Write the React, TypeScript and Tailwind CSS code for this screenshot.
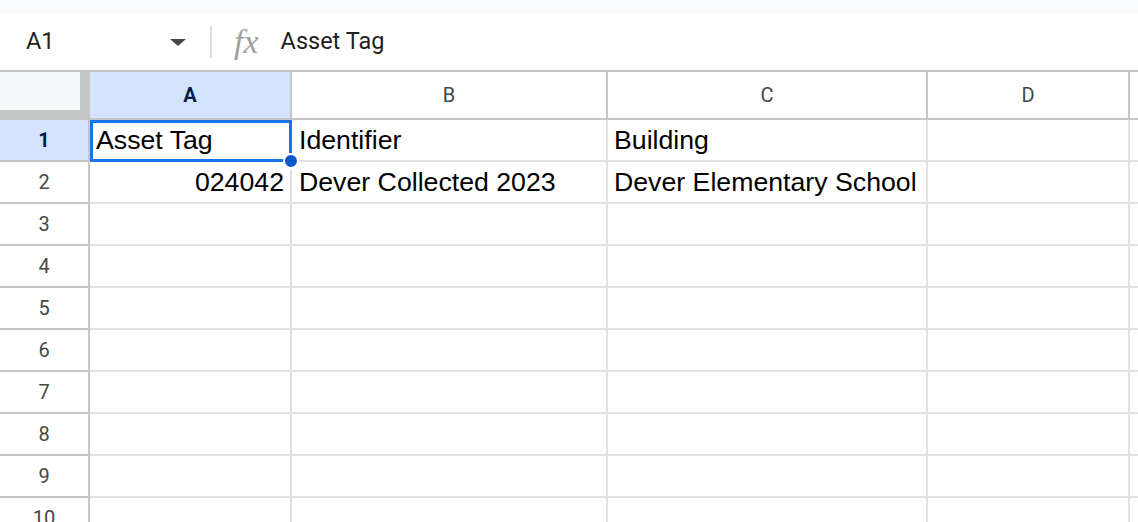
import React from "react";

const columns = [
  { key: "A", width: "w-[202px]", active: true },
  { key: "B", width: "w-[316px]", active: false },
  { key: "C", width: "w-[320px]", active: false },
  { key: "D", width: "w-[202px]", active: false },
];

const rows: { a?: string; b?: string; c?: string }[] = [
  { a: "Asset Tag", b: "Identifier", c: "Building" },
  { a: "024042", b: "Dever Collected 2023", c: "Dever Elementary School" },
  {},
  {},
  {},
  {},
  {},
  {},
  {},
  {},
];

const cellFont = { fontFamily: '"Liberation Sans", Arial, sans-serif' };
const uiFont = { fontFamily: 'Roboto, "Liberation Sans", Arial, sans-serif' };

const FormulaBar = () => (
  <div className="flex h-[56px] items-center bg-white text-[23.5px] text-[#1f1f1f]" style={uiFont}>
    <div className="flex w-[210px] items-center pl-[26px] pr-[24px]">
      <span className="flex-1">A1</span>
      <span className="h-0 w-0 border-x-[8px] border-t-[7px] border-x-transparent border-t-[#444746]" />
    </div>
    <div className="h-[32px] w-[2px] bg-[#dadce0]" />
    <span
      className="ml-[22px] mr-[22px] text-[34px] italic leading-none text-[#a0a0a0]"
      style={{ fontFamily: '"Liberation Serif", "Times New Roman", serif' }}
    >
      fx
    </span>
    <span>Asset Tag</span>
  </div>
);

const HeaderRow = () => (
  <div className="flex h-[50px] border-y-2 border-[#c4c7c5] text-[20px]" style={uiFont}>
    <div className="flex h-full w-[90px] shrink-0 flex-col bg-[#c4c7c5]">
      <div className="h-[38px] w-[80px] bg-[#f8f9fa]" />
    </div>
    {columns.map((col) => (
      <div
        key={col.key}
        className={`${col.width} flex shrink-0 items-center justify-center border-r-2 border-[#c4c7c5] ${
          col.active ? "bg-[#d3e3fd] font-bold text-[#041e49]" : "bg-white text-[#444746]"
        }`}
      >
        {col.key}
      </div>
    ))}
    <div className="flex-1 bg-white" />
  </div>
);

const DataRow = ({ n, row }: { n: number; row: { a?: string; b?: string; c?: string } }) => {
  const active = n === 1;
  return (
    <div className="flex h-[42px]">
      <div
        className={`flex w-[90px] shrink-0 items-center justify-center border-b-2 border-r-2 border-[#c4c7c5] text-[20px] ${
          active ? "bg-[#d3e3fd] font-bold text-[#041e49]" : "bg-white text-[#444746]"
        }`}
        style={uiFont}
      >
        {n}
      </div>
      <div className="flex flex-1 text-[26.7px] text-black" style={cellFont}>
        <div className="flex w-[202px] shrink-0 items-center justify-end border-b-2 border-r-2 border-[#e1e1e1] px-[6px]">
          {row.a && (
            <span className={row.a === "024042" ? "" : "mr-auto"}>{row.a}</span>
          )}
        </div>
        <div className="flex w-[316px] shrink-0 items-center border-b-2 border-r-2 border-[#e1e1e1] px-[7px]">
          {row.b}
        </div>
        <div className="flex w-[320px] shrink-0 items-center border-b-2 border-r-2 border-[#e1e1e1] px-[6px] whitespace-nowrap">
          {row.c}
        </div>
        <div className="w-[202px] shrink-0 border-b-2 border-r-2 border-[#e1e1e1]" />
        <div className="flex-1 border-b-2 border-[#e1e1e1]" />
      </div>
    </div>
  );
};

export default function App() {
  return (
    <div className="h-[522px] w-[1138px] overflow-hidden bg-white">
      <div className="h-[14px] bg-[#f9fbfd]" />
      <FormulaBar />
      <HeaderRow />
      <div className="relative">
        {rows.map((row, i) => (
          <DataRow key={i} n={i + 1} row={row} />
        ))}
        {/* active cell outline with fill handle */}
        <div className="pointer-events-none absolute left-[90px] top-0 h-[42px] w-[202px] border-[3px] border-[#1a73e8]" />
        <div className="absolute left-[283px] top-[33px] h-[16px] w-[16px] rounded-full border-2 border-white bg-[#0b57d0]" />
      </div>
    </div>
  );
}
